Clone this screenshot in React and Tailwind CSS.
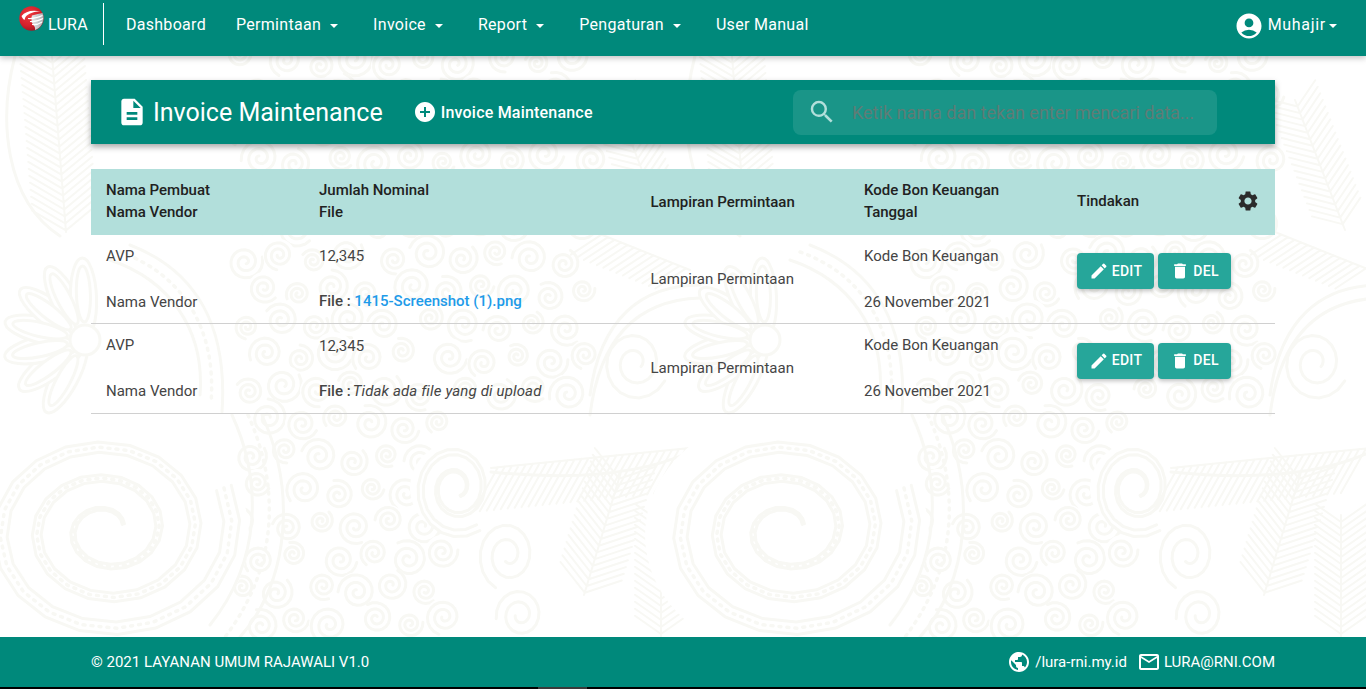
import React from 'react';
import {
  MdDescription, MdAddCircle, MdSearch, MdSettings, MdEdit, MdDelete,
  MdPublic, MdMailOutline, MdAccountCircle,
} from 'react-icons/md';

const navItems = [
  { label: 'Dashboard' },
  { label: 'Permintaan', caret: true },
  { label: 'Invoice', caret: true },
  { label: 'Report', caret: true },
  { label: 'Pengaturan', caret: true },
  { label: 'User Manual' },
];

const rows = [
  { file: '1415-Screenshot (1).png' },
  { file: null },
];

const spiral = (cx, cy, r, turns = 2.5, start = 0, sy = 1, end = 0.12) => {
  const steps = Math.round(turns * 20);
  let d = '';
  for (let i = 0; i <= steps; i++) {
    const t = i / steps;
    const a = start + t * turns * Math.PI * 2;
    const rad = r * (1 - t * (1 - end));
    d += `${i ? 'L' : 'M'}${(cx + Math.cos(a) * rad).toFixed(1)} ${(cy + Math.sin(a) * rad * sy).toFixed(1)}`;
  }
  return d;
};

const feather = (x1, y1, x2, y2, w, both = true, gap = 7) => {
  const len = Math.hypot(x2 - x1, y2 - y1);
  const ux = (x2 - x1) / len;
  const uy = (y2 - y1) / len;
  let d = `M${x1} ${y1}L${x2} ${y2}`;
  for (let s = gap; s < len; s += gap) {
    const px = x1 + ux * s;
    const py = y1 + uy * s;
    d += `M${px.toFixed(1)} ${py.toFixed(1)}l${((-uy - ux * 0.7) * w).toFixed(1)} ${((ux - uy * 0.7) * w).toFixed(1)}`;
    if (both) d += `M${px.toFixed(1)} ${py.toFixed(1)}l${((uy - ux * 0.7) * w).toFixed(1)} ${((-ux - uy * 0.7) * w).toFixed(1)}`;
  }
  return d;
};

// small curls that fill the batik background
const curls = [];
for (let gy = 0; gy < 18; gy++) {
  for (let gx = 0; gx < 10; gx++) {
    const y = 60 + gy * 33 + ((gx * 19 + gy * 71) % 13) - 6;
    const x = 245 + gx * 36 + (gy % 2) * 18 + ((gx * 37 + gy * 53) % 13) - 6;
    if (y > 415 && x > 445) continue;
    curls.push({ x, y, r: 12 + ((gx * 13 + gy * 29) % 8), s: gx * 2 + gy });
  }
}

const petals = [118, 143, 168, 193, 218, 243, 268];

const Tile = ({ ox }) => (
  <g transform={`translate(${ox} 0)`} stroke="#f8f8f4" fill="none" strokeWidth="3" strokeLinecap="round">
    {curls.map((c, i) => (
      <g key={i}>
        <circle cx={c.x} cy={c.y} r={c.r + 1} fill="#ffffff" stroke="none" />
        <path d={spiral(c.x, c.y, c.r, 2.2, c.s)} />
      </g>
    ))}

    <ellipse cx="107" cy="535" rx="142" ry="122" fill="#ffffff" stroke="none" />
    <path d={spiral(107, 530, 135, 3, -0.4, 0.85, 0.14)} />
    <path d={spiral(107, 530, 127, 3, -0.4, 0.85, 0.14)} strokeDasharray="2 6" strokeWidth="3.5" />
    <path d={spiral(107, 530, 119, 3, -0.4, 0.85, 0.14)} />
    <path d="M232 415C262 480 262 560 210 625" />
    <path d="M248 415C282 490 276 570 225 637" strokeDasharray="2 6" strokeWidth="3.5" />
    <path d="M262 415C296 490 290 580 240 637" />

    <g fill="#ffffff">
      {petals.map((a) => (
        <ellipse key={a} cx="42" cy="0" rx="40" ry="13" transform={`translate(85 340) rotate(${a})`} />
      ))}
      {petals.map((a) => (
        <ellipse key={`o${a}`} cx="46" cy="0" rx="28" ry="7" transform={`translate(85 340) rotate(${a})`} />
      ))}
      <circle cx="85" cy="340" r="15" />
    </g>
    <path d="M110 260C170 280 205 330 200 395M130 245C195 270 228 325 222 412" />
    <path d="M120 252C182 274 217 328 211 403" strokeDasharray="2 6" strokeWidth="3.5" />

    <path d={feather(52, 56, 66, 232, 32)} strokeWidth="2" />
    <path d="M15 56C-2 120 5 200 60 236" />

    <circle cx="456" cy="488" r="46" fill="#ffffff" stroke="none" />
    <path d={spiral(456, 488, 44, 2, 1, 1.15, 0.2)} />
    <path d={spiral(456, 488, 38, 2, 1, 1.15, 0.2)} />
    <circle cx="508" cy="555" r="32" fill="#ffffff" stroke="none" />
    <path d={spiral(508, 555, 30, 2, 2, 1.2, 0.2)} />
    <path d={spiral(520, 615, 24, 2, 3, 1.1, 0.2)} />

    <path d={feather(491, 468, 690, 448, 42, false)} strokeWidth="2" />
    <path d="M491 472C570 480 640 475 690 452" />
    <path d={feather(621, 472, 584, 595, 32)} strokeWidth="2" />
    <path d={feather(661, 515, 661, 640, 26)} strokeWidth="2" />

    <path d={feather(615, 100, 665, 230, 26)} strokeWidth="2" />
    <path d={feather(595, 232, 690, 270, 30, false)} strokeWidth="2" />
    <path d={spiral(635, 363, 34, 2, 0.5, 1.1, 0.2)} />
    <path d="M590 395C600 320 640 285 700 285M590 415C600 335 640 300 700 298" />
  </g>
);

const BatikBackground = () => (
  <svg className="absolute inset-0 w-full h-full" viewBox="0 56 1366 581">
    <Tile ox={0} />
    <Tile ox={680} />
  </svg>
);

const Logo = () => (
  <svg width="25" height="25" viewBox="0 0 25 25">
    <defs>
      <radialGradient id="lg" cx="38%" cy="35%" r="70%">
        <stop offset="0" stopColor="#ee3a3e" />
        <stop offset="0.65" stopColor="#d4202b" />
        <stop offset="1" stopColor="#9c1722" />
      </radialGradient>
      <linearGradient id="ls" x1="0" y1="0" x2="1" y2="0">
        <stop offset="0" stopColor="#e9e9eb" />
        <stop offset="1" stopColor="#a9aaae" />
      </linearGradient>
    </defs>
    <circle cx="12.500" cy="12.500" r="12.200" fill="url(#lg)" />
    <path d="M13 9.500C17 8.500 21 7.500 23.500 7c1.500 3 1.500 7.500-0.500 11-1.500 2.800-4 5-7 6 0.500-2-0.500-4-2-5.500-1.500-2-2-5-1-9.500z" fill="url(#ls)" />
    <path d="M2.500 10C6 5.500 13 3.500 21.500 5.500 15 5.500 9 7.500 6.500 11c-0.500 1.500-1 3-1 3-1.500-1-2.500-2.500-3-4z" fill="#ffffff" />
    <path d="M9 12.500c5 0.500 10-1 14.500-3M11 15.500c4 0.500 9-1 13-3M13 18.500c3.500 0.500 7-0.500 10-2.500" stroke="#ffffff" strokeWidth="1.200" fill="none" />
  </svg>
);

const Caret = ({ className = 'ml-[9px]' }) => (
  <span className={`${className} w-0 h-0 mt-[2px] border-x-[4.5px] border-t-[4.5px] border-x-transparent border-t-white`} />
);

const Navbar = () => (
  <nav className="relative z-10 h-14 shrink-0 bg-[#00897b] text-white shadow-[0_2px_6px_rgba(0,0,0,0.25)] flex items-start">
    <div className="flex items-center h-[44px] pl-[19px] mt-[2px]">
      <div className="mb-[11px] -mr-px"><Logo /></div>
      <span className="ml-[5px] text-base mt-[1px] tracking-[0.25px]">LURA</span>
      <div className="ml-[15px] w-px h-[42px] bg-white" />
    </div>
    <div className="flex items-center h-[49px] ml-[22px] gap-[30px] text-base tracking-[0.3px]">
      {navItems.map((item) => (
        <a key={item.label} className={`flex items-center ${item.caret ? 'pr-[5px]' : ''}`}>
          <span>{item.label}</span>
          {item.caret && <Caret />}
        </a>
      ))}
    </div>
    <div className="ml-auto mr-[29px] flex items-center h-[50px] text-base tracking-[0.7px]">
      <MdAccountCircle size={30} className="mt-[2px]" />
      <span className="ml-[4px] -mt-[1px]">Muhajir</span>
      <Caret className="ml-[3px]" />
    </div>
  </nav>
);

const TitleBar = () => (
  <div className="h-16 bg-[#00897b] text-white shadow-[0_3px_6px_rgba(0,0,0,0.35)] flex items-center pl-[25px] pr-[58px]">
    <MdDescription size={32} />
    <h1 className="ml-[5px] text-[25px] mt-[1px]">Invoice Maintenance</h1>
    <a className="ml-[30px] flex items-center text-base font-medium tracking-[0.2px]">
      <MdAddCircle size={24} />
      <span className="ml-[4px] mt-[1px]">Invoice Maintenance</span>
    </a>
    <div className="ml-auto w-[424px] h-[45px] rounded-lg bg-white/10 flex items-center pl-[14px]">
      <MdSearch size={30} className="text-[#b2dfdb]" />
      <input
        className="ml-[15px] flex-1 min-w-0 bg-transparent outline-none text-[18px] placeholder:text-[#5f7c76]"
        placeholder="Ketik nama dan tekan enter mencari data..."
      />
    </div>
  </div>
);

const cols = 'grid grid-cols-[213px_331.5px_213.5px_213px_213px]';

const TableHead = () => (
  <div className={`${cols} h-[66px] items-center bg-[#b2dfdb] font-medium text-[#212121] pb-[2px]`}>
    <div className="pl-[15px] leading-[22px]">Nama Pembuat<br />Nama Vendor</div>
    <div className="pl-[15px] leading-[22px]">Jumlah Nominal<br />File</div>
    <div className="pl-[15px] pt-[2px]">Lampiran Permintaan</div>
    <div className="pl-[15px] leading-[22px]">Kode Bon Keuangan<br />Tanggal</div>
    <div className="pl-[15px] pr-[15px] flex items-center justify-between">
      Tindakan
      <MdSettings size={24} className="text-[#2b2b2b]" />
    </div>
  </div>
);

const Stack = ({ className = 'pt-[10px] gap-[24px]', children }) => (
  <div className={`pl-[15px] flex flex-col [&>div]:h-[22px] [&>div]:leading-[22px] ${className}`}>{children}</div>
);

const ActionButton = ({ icon: Icon, label, width }) => (
  <button className={`${width} h-9 rounded bg-[#26a69a] text-white text-[14px] font-medium tracking-[0.3px] flex items-center justify-center gap-[3px] shadow-[0_2px_4px_rgba(0,0,0,0.25)]`}>
    <Icon size={20} />
    {label}
  </button>
);

const TableRow = ({ file }) => (
  <div className={`${cols} h-[89.4px] border-b border-[#d0d0d0] text-[#454545]`}>
    <Stack>
      <div>AVP</div>
      <div>Nama Vendor</div>
    </Stack>
    <Stack className="pt-[10.3px] gap-[23px]">
      <div>12,345</div>
      <div>
        {file
          ? <><span className="font-medium">File : </span><a className="font-medium text-[#1e9be9]">{file}</a></>
          : <><span className="font-medium">File :</span><i className="pl-[2px] tracking-[0.14px]">Tidak ada file yang di upload</i></>}
      </div>
    </Stack>
    <div className="pl-[15px] self-center">Lampiran Permintaan</div>
    <Stack>
      <div>Kode Bon Keuangan</div>
      <div>26 November 2021</div>
    </Stack>
    <div className="pl-[15px] pt-[18.4px] flex items-start gap-1">
      <ActionButton icon={MdEdit} label="EDIT" width="w-[77px]" />
      <ActionButton icon={MdDelete} label="DEL" width="w-[73px]" />
    </div>
  </div>
);

const Footer = () => (
  <footer className="h-[50px] shrink-0 bg-[#00897b] text-white px-[91px] flex items-center justify-between">
    <span>© 2021 LAYANAN UMUM RAJAWALI V1.0</span>
    <div className="flex items-center">
      <MdPublic size={24} />
      <span className="ml-[4px]">/lura-rni.my.id</span>
      <MdMailOutline size={24} className="ml-[10px]" />
      <span className="ml-[3px]">LURA@RNI.COM</span>
    </div>
  </footer>
);

export default function App() {
  return (
    <div className="h-[689px] overflow-hidden flex flex-col bg-white text-[15px] font-['Roboto',sans-serif]">
      <Navbar />
      <main className="relative flex-1 overflow-hidden">
        <BatikBackground />
        <div className="relative mx-[91px] pt-6">
          <TitleBar />
          <div className="mt-[25px]">
            <TableHead />
            {rows.map((row, i) => <TableRow key={i} file={row.file} />)}
          </div>
        </div>
      </main>
      <Footer />
      <div className="h-[2px] shrink-0 flex bg-black">
        <div className="ml-[538px] w-[49px] bg-[#3a3a3a]" />
      </div>
    </div>
  );
}
